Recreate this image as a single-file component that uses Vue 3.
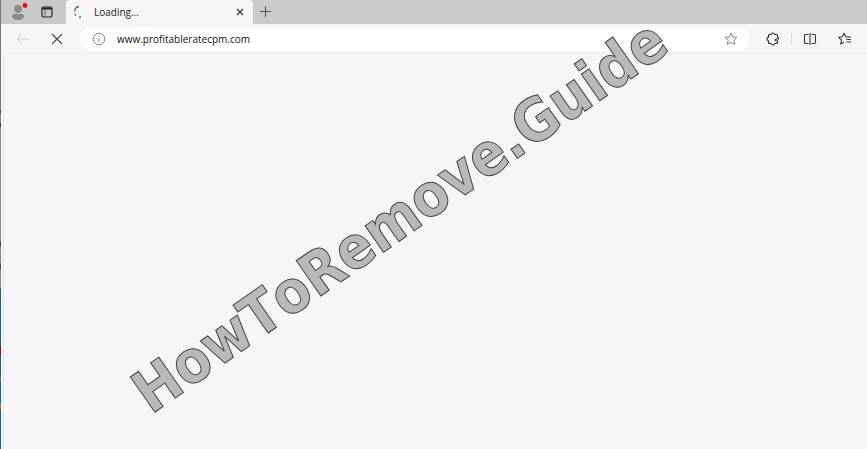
<script setup>
import { ref } from 'vue'

const address = ref('www.profitableratecpm.com')
</script>

<template>
  <div class="desktop">
    <div class="backdrop" aria-hidden="true"></div>
    <div class="browser">
      <header class="tabs">
        <div class="tools">
          <button class="icon profile" aria-label="Profile">
            <svg width="20" height="20" viewBox="0 0 20 20">
              <circle cx="9" cy="7" r="3.900" fill="#8b8887" />
              <path d="M3 14q0-2 2.500-2h7q2.500 0 2.500 2-.5 4-6 4t-6-4z" fill="#8b8887" />
              <circle cx="16" cy="3.500" r="2.400" fill="#e60d12" />
            </svg>
          </button>
          <button class="icon" aria-label="Tab actions">
            <svg width="12" height="12" viewBox="0 0 12 12" fill="none" stroke="#222">
              <rect x="1" y="1" width="10" height="10" rx="1.500" stroke-width="1.200" />
              <path d="M1 2.500h10" stroke-width="2" /><path d="M4 3v8" stroke="#666" />
            </svg>
          </button>
        </div>
        <div class="tab">
          <svg class="spinner" width="12" height="14" viewBox="0 0 12 14" fill="none" stroke="#666" stroke-width="1.400">
            <path d="M6 1.500Q2 2 1.600 6.500M2 9l1 1.500M6 12.500l2-.5" />
          </svg>
          <span class="title">Loading...</span>
          <button class="icon close" aria-label="Close tab">
            <svg width="8" height="8" viewBox="0 0 8 8" stroke="#333" stroke-width="1.200"><path d="M1 1l6 6M7 1L1 7" /></svg>
          </button>
        </div>
        <button class="icon add" aria-label="New tab">
          <svg width="12" height="12" viewBox="0 0 12 12" stroke="#555" stroke-width="1.100"><path d="M6.500 0v11M1 5.500h11" /></svg>
        </button>
      </header>
      <nav class="toolbar">
        <button class="icon back" aria-label="Back" disabled>
          <svg width="14" height="12" viewBox="0 0 14 12" fill="none" stroke="#cecece"><path d="M13.500 6H1M6 1L1 6l5 5" /></svg>
        </button>
        <button class="icon stop" aria-label="Stop loading">
          <svg width="12" height="12" viewBox="0 0 12 12" stroke="#444" stroke-width="1.100"><path d="M1 1l10 10M11 1L1 11" /></svg>
        </button>
        <div class="address">
          <button class="icon" aria-label="Site information">
            <svg width="14" height="14" viewBox="0 0 14 14" fill="none" stroke="#888">
              <circle cx="7" cy="7" r="5.800" /><path d="M7 6v4.200M7 3.700v1.200" />
            </svg>
          </button>
          <input v-model="address" aria-label="Address" spellcheck="false" />
          <button class="icon" aria-label="Add to favorites">
            <svg width="14" height="14" viewBox="0 0 14 14" fill="none" stroke="#888" stroke-linejoin="round">
              <path d="M7 1l1.700 3.900 4.300.4-3.200 2.900.9 4.300L7 10.300l-3.700 2.200.9-4.300L1 5.300l4.300-.4z" />
            </svg>
          </button>
        </div>
        <button class="icon extensions" aria-label="Extensions">
          <svg width="14" height="14" viewBox="0 0 14 14" fill="none" stroke="#333" stroke-width="1.200" stroke-linejoin="round">
            <path d="M3.500 2.500h1.700Q5.500 1 7 1t1.800 1.500H10.500q1 0 1 1V5Q13 5.500 12.500 7H10.500Q9 7.200 9.300 8.500L11.500 9v1.500q0 1-1 1H8.800Q8.500 13 7 13t-1.800-1.500H3.500q-1 0-1-1V8.800Q1 8.500 1 7t1.500-1.800V3.500q0-1 1-1z" />
          </svg>
        </button>
        <span class="rule"></span>
        <button class="icon split" aria-label="Split screen">
          <svg width="14" height="14" viewBox="0 0 14 14" fill="none" stroke="#333" stroke-width="1.100">
            <path d="M5.500 2.500h-3q-1 0-1 1v7q0 1 1 1h3M8.500 2.500h3q1 0 1 1v7q0 1-1 1h-3M7 1v12" />
          </svg>
        </button>
        <button class="icon" aria-label="Favorites">
          <svg width="14" height="14" viewBox="0 0 14 14" fill="none" stroke="#333" stroke-width="1.100" stroke-linejoin="round">
            <path d="M13 5H8L6 1.200 4.300 4.700.7 5.300l2.700 2.800-.7 4L6 10.200M8.500 7.500H13M8.500 10H13" />
          </svg>
        </button>
      </nav>
      <main class="page"></main>
    </div>
    <svg class="watermark" viewBox="0 0 867 449">
      <text transform="translate(151 415) rotate(-35)">HowToRemove.Guide</text>
    </svg>
  </div>
</template>

<style>
body {
  background: #f6f6f6;
}
</style>

<style scoped>
.desktop {
  position: relative;
  display: flex;
  min-height: 100vh;
  overflow: hidden;
  background: #f6f6f6;
  font-family: "Open Sans", "Noto Sans", sans-serif;
  font-size: 10px;
  color: #222;
}
.backdrop {
  width: 1px;
  background: linear-gradient(#777 0 110px, #222 112px, #888 114px 122px, #222 125px, #888 128px 240px, #333 244px, #888 248px 262px, #333 267px, #888 270px 288px, #17617b 289px 345px, #8b1117 347px 354px, #17617b 356px 376px, #a27542 378px, #17617b 383px 402px, #b6842b 406px, #17617b 411px);
}
.browser {
  flex: 1;
  min-width: 0;
}
.tabs {
  display: flex;
  height: 24px;
  background: #cbcbcb;
}
.tools {
  display: flex;
  align-items: center;
  width: 65px;
  padding-left: 8px;
  gap: 12px;
  box-sizing: border-box;
  background: #c8c8c8;
}
.icon {
  display: flex;
  align-items: center;
  justify-content: center;
  flex: none;
  margin: 0;
  padding: 0;
  border: 0;
  background: none;
}
.tab {
  display: flex;
  align-items: center;
  width: 187px;
  padding: 0 9px 0 7px;
  box-sizing: border-box;
  border-radius: 4px 4px 0 0;
  background: #f6f6f6;
}
.title {
  flex: 1;
  margin-left: 9px;
}
.add {
  padding: 0 6px;
}
.toolbar {
  display: flex;
  align-items: center;
  height: 29px;
  margin-left: 2px;
  padding: 0 15px 0 13px;
  border-bottom: 1px solid #ececec;
}
.stop {
  margin: 0 17px 0 21px;
}
.address {
  display: flex;
  align-items: center;
  flex: 1;
  height: 24px;
  min-width: 0;
  padding: 0 12px;
  border-radius: 12px;
  background: #fff;
}
.address input {
  flex: 1;
  min-width: 0;
  margin: 0;
  padding: 0 11px;
  border: 0;
  outline: 0;
  background: none;
  color: #111;
  font: inherit;
}
.extensions {
  margin-left: 16px;
}
.rule {
  width: 1px;
  height: 12px;
  margin: 0 11px;
  background: #ddd;
}
.split {
  margin-right: 21px;
}
.page {
  min-height: 395px;
  margin-left: 2px;
  border-left: 1px solid #e5e5e5;
}
.watermark {
  position: absolute;
  inset: 0;
  width: 100%;
  pointer-events: none;
}
.watermark text {
  fill: #b9b9b9;
  stroke: #444;
  stroke-width: 1px;
  font-family: "DejaVu Sans Condensed", "DejaVu Sans", sans-serif;
  font-size: 59px;
  font-weight: 700;
  font-kerning: none;
}
</style>
